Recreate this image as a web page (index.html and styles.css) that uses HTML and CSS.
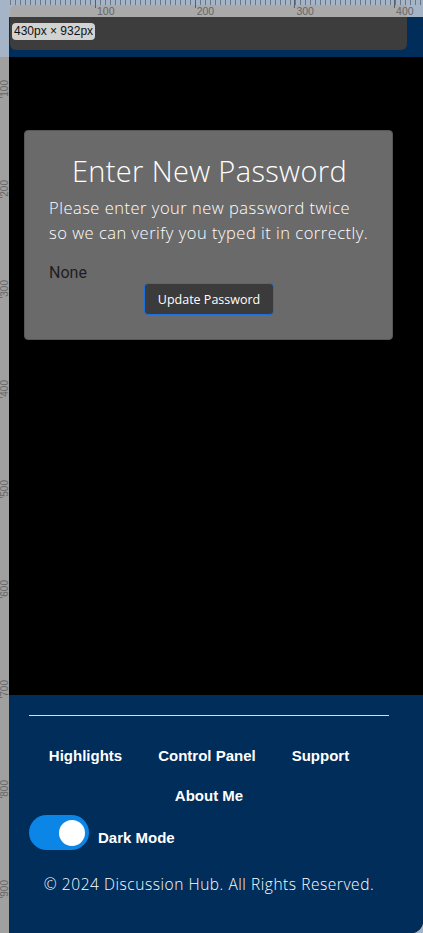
FILE: index.html
```html
<!DOCTYPE html>
<html lang="en">
<head>
<meta charset="utf-8">
<title>Enter New Password</title>
<link rel="stylesheet" href="styles.css">
</head>
<body>
<div class="frame">
  <div class="corner"></div>
  <div class="ruler-top">
    <div class="scale">
      <span class="scale-lead"></span>
      <span class="mark">100</span>
      <span class="mark">200</span>
      <span class="mark">300</span>
      <span class="mark">400</span>
    </div>
  </div>
  <div class="ruler-left">
    <span class="vmark vmark-first"><span>100</span></span>
    <span class="vmark"><span>200</span></span>
    <span class="vmark"><span>300</span></span>
    <span class="vmark"><span>400</span></span>
    <span class="vmark"><span>500</span></span>
    <span class="vmark"><span>600</span></span>
    <span class="vmark"><span>700</span></span>
    <span class="vmark"><span>800</span></span>
    <span class="vmark"><span>900</span></span>
  </div>
  <div class="page">
    <header class="topbar"></header>
    <main class="main">
      <section class="modal">
        <h1 class="modal-title">Enter New Password</h1>
        <p class="modal-text">Please enter your new password twice so we can verify you typed it in correctly.</p>
        <div class="modal-value">None</div>
        <div class="modal-actions">
          <button class="btn-update" type="button">Update Password</button>
        </div>
      </section>
    </main>
    <footer class="footer">
      <div class="footer-inner">
        <hr class="footer-rule">
        <nav class="footer-nav">
          <a class="footer-link" href="#">Highlights</a>
          <a class="footer-link" href="#">Control Panel</a>
          <a class="footer-link footer-link-end" href="#">Support</a>
          <a class="footer-link" href="#">About Me</a>
        </nav>
        <div class="mode-row">
          <span class="toggle"><span class="toggle-knob"></span></span>
          <span class="mode-label">Dark Mode</span>
        </div>
        <p class="copyright">© 2024 Discussion Hub. All Rights Reserved.</p>
      </div>
    </footer>
  </div>
  <div class="devbar">
    <span class="size-badge">430px × 932px</span>
  </div>
</div>
</body>
</html>
```
FILE: styles.css
```css
* { box-sizing: border-box; }

html, body {
  margin: 0;
  padding: 0;
  background: #a5b4c6;
}

.frame {
  position: relative;
  width: 423px;
  height: 933px;
  overflow: hidden;
  display: grid;
  grid-template-columns: 9px 414px;
  grid-template-rows: 17px 916px;
  background: #a5b4c6;
  font-family: "Liberation Sans", Arial, sans-serif;
}

.corner { background: #a5b4c6; }

/* top ruler */
.ruler-top {
  background-color: #a5b4c6;
  background-image: repeating-linear-gradient(90deg, transparent 0 1px, #6c7786 1px 2px, transparent 2px 5px);
  background-size: 100% 5px;
  background-repeat: no-repeat;
}

.scale {
  display: flex;
  margin: 5px 0 0 1px;
  width: 397px;
  height: 12px;
  background: #aaaaaa;
  border-top-left-radius: 6px;
}

.scale-lead { flex: 0 0 85px; }

.mark {
  position: relative;
  flex: 0 0 99.7px;
  font-size: 10.5px;
  line-height: 10px;
  padding-left: 2px;
  padding-top: 1px;
  color: #666;
}

.mark::before {
  content: "";
  position: absolute;
  left: 0;
  top: -5px;
  width: 1px;
  height: 8px;
  background: #56606c;
}

/* left ruler */
.ruler-left {
  display: flex;
  flex-direction: column;
  background: linear-gradient(180deg, #a5b4c6 0 40px, #a0a0a0 40px);
}

.vmark {
  flex: 0 0 100px;
  display: flex;
  align-items: flex-end;
  justify-content: center;
  padding-bottom: 1px;
}

.vmark-first { flex-basis: 83px; }

.vmark span {
  writing-mode: vertical-rl;
  transform: rotate(180deg);
  font-size: 10px;
  line-height: 10px;
  color: #666;
}

.vmark span::before {
  content: "'";
}

/* page */
.page {
  display: flex;
  flex-direction: column;
  background: #000;
  border-bottom-right-radius: 12px;
  overflow: hidden;
}

.topbar {
  flex: 0 0 40px;
  background: #002d5a;
}

.main {
  flex: 0 0 638px;
  background: #000;
  padding-top: 73px;
}

.modal {
  margin-left: 15px;
  width: 369px;
  height: 210px;
  background: #6b6a6a;
  border: 1px solid #575757;
  border-radius: 4px;
  padding: 22px 22px 0 24px;
  color: #fff;
}

.modal-title {
  margin: 0;
  text-align: center;
  font-family: "Open Sans", sans-serif;
  font-weight: 300;
  font-size: 29px;
  line-height: 35px;
  letter-spacing: 0.35px;
}

.modal-text {
  margin: 7px 0 0;
  font-family: "Open Sans", sans-serif;
  font-weight: 300;
  font-size: 16.5px;
  line-height: 25px;
  letter-spacing: 0.5px;
}

.modal-value {
  margin-top: 18px;
  font-family: Roboto, sans-serif;
  font-size: 16px;
  line-height: 20px;
  color: #1e1e1e;
}

.modal-actions {
  display: flex;
  justify-content: center;
  margin-top: 0;
  padding-right: 1px;
}

.btn-update {
  width: 130px;
  height: 32px;
  background: #3b3b3b;
  border: 1px solid #1b6fe0;
  border-radius: 4px;
  color: #fff;
  font-family: "Open Sans", sans-serif;
  font-size: 12.5px;
  padding: 0;
}

/* footer */
.footer {
  flex: 1 1 auto;
  background: #002d5a;
  color: #fff;
}

.footer-inner {
  width: 400px;
  padding-top: 20px;
}

.footer-rule {
  margin: 0 auto;
  width: 360px;
  height: 1px;
  border: 0;
  background: #d8dee6;
}

.footer-nav {
  display: flex;
  flex-wrap: wrap;
  justify-content: center;
  column-gap: 36px;
  row-gap: 20px;
  margin-top: 30px;
}

.footer-link {
  color: #fff;
  text-decoration: none;
  font-weight: bold;
  font-size: 15px;
  line-height: 20px;
}

.footer-link-end { margin-right: 20px; }

.mode-row {
  display: flex;
  align-items: center;
  gap: 9px;
  margin-top: 9px;
  padding-left: 20px;
}

.toggle {
  display: flex;
  align-items: center;
  justify-content: flex-end;
  width: 60px;
  height: 35px;
  padding-right: 4px;
  background: #0b85e6;
  border-radius: 18px;
}

.toggle-knob {
  width: 26px;
  height: 26px;
  border-radius: 50%;
  background: #fff;
}

.mode-label {
  margin-top: 10px;
  font-weight: bold;
  font-size: 15px;
  line-height: 20px;
}

.copyright {
  margin: 24px 0 0;
  text-align: center;
  font-family: "Open Sans", sans-serif;
  font-weight: 300;
  font-size: 15.5px;
  line-height: 20px;
  letter-spacing: 0.55px;
}

/* device toolbar overlay */
.devbar {
  position: absolute;
  left: 10px;
  top: 17px;
  width: 397px;
  height: 33px;
  background: #3d3d3d;
  border-radius: 0 0 6px 6px;
  padding: 4px 2px;
}

.size-badge {
  display: inline-block;
  background: #d2d2d2;
  color: #111;
  border-radius: 4px;
  padding: 1px 2px;
  font-family: "Liberation Sans", Arial, sans-serif;
  font-size: 12px;
  line-height: 15px;
}
```
